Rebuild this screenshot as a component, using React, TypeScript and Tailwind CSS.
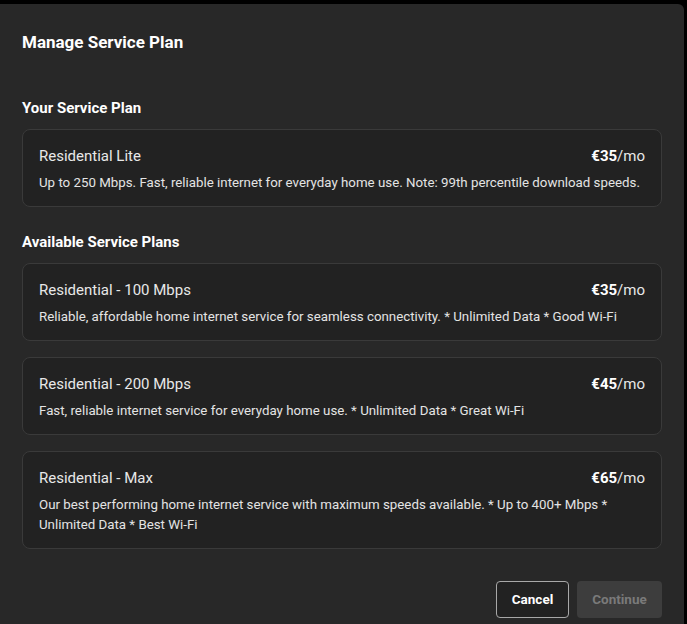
const currentPlan = {
  name: 'Residential Lite',
  price: 35,
  description: 'Up to 250 Mbps. Fast, reliable internet for everyday home use. Note: 99th percentile download speeds.',
};

const availablePlans = [
  {
    name: 'Residential - 100 Mbps',
    price: 35,
    description: 'Reliable, affordable home internet service for seamless connectivity. * Unlimited Data * Good Wi-Fi',
  },
  {
    name: 'Residential - 200 Mbps',
    price: 45,
    description: 'Fast, reliable internet service for everyday home use. * Unlimited Data * Great Wi-Fi',
  },
  {
    name: 'Residential - Max',
    price: 65,
    description: 'Our best performing home internet service with maximum speeds available. * Up to 400+ Mbps * Unlimited Data * Best Wi-Fi',
  },
];

type Plan = { name: string; price: number; description: string };

function PlanCard({ plan }: { plan: Plan }) {
  return (
    <div className="rounded-lg border border-[#3a3a3a] bg-[#222222] px-4 pt-4 pb-[13px]">
      <div className="flex items-center justify-between">
        <span className="text-[15px] leading-5 text-[#e8e8e8]">{plan.name}</span>
        <span className="text-[15px] leading-5 text-[#e8e8e8]">
          <span className="font-bold text-white">€{plan.price}</span>/mo
        </span>
      </div>
      <p className="mt-[7px] text-[13.3px] leading-5 text-[#e4e4e4]">{plan.description}</p>
    </div>
  );
}

export default function App() {
  return (
    <div className="h-[624px] overflow-hidden bg-black pt-[4px] pr-[3px] font-['Roboto',sans-serif]">
      <div className="h-full rounded-tr-md bg-[#282828] px-[22px]">
        <h1 className="pt-[26px] text-[17px] font-bold leading-6 text-white">Manage Service Plan</h1>

        <h2 className="mt-[44px] text-[15px] font-bold leading-5 text-white">Your Service Plan</h2>
        <div className="mt-[11px]">
          <PlanCard plan={currentPlan} />
        </div>

        <h2 className="mt-[25px] text-[15px] font-bold leading-5 text-white">Available Service Plans</h2>
        <div className="mt-[11px] flex flex-col gap-4">
          {availablePlans.map((plan) => (
            <PlanCard key={plan.name} plan={plan} />
          ))}
        </div>

        <div className="mt-8 flex justify-end gap-2">
          <button className="h-[37px] w-[73px] rounded border border-[#a8a8a8] bg-[#222222] text-[13.5px] font-bold text-white">
            Cancel
          </button>
          <button className="h-[37px] w-[85px] rounded bg-[#3d3d3d] text-[13.5px] font-bold text-[#7a7a7a]" disabled>
            Continue
          </button>
        </div>
      </div>
    </div>
  );
}
